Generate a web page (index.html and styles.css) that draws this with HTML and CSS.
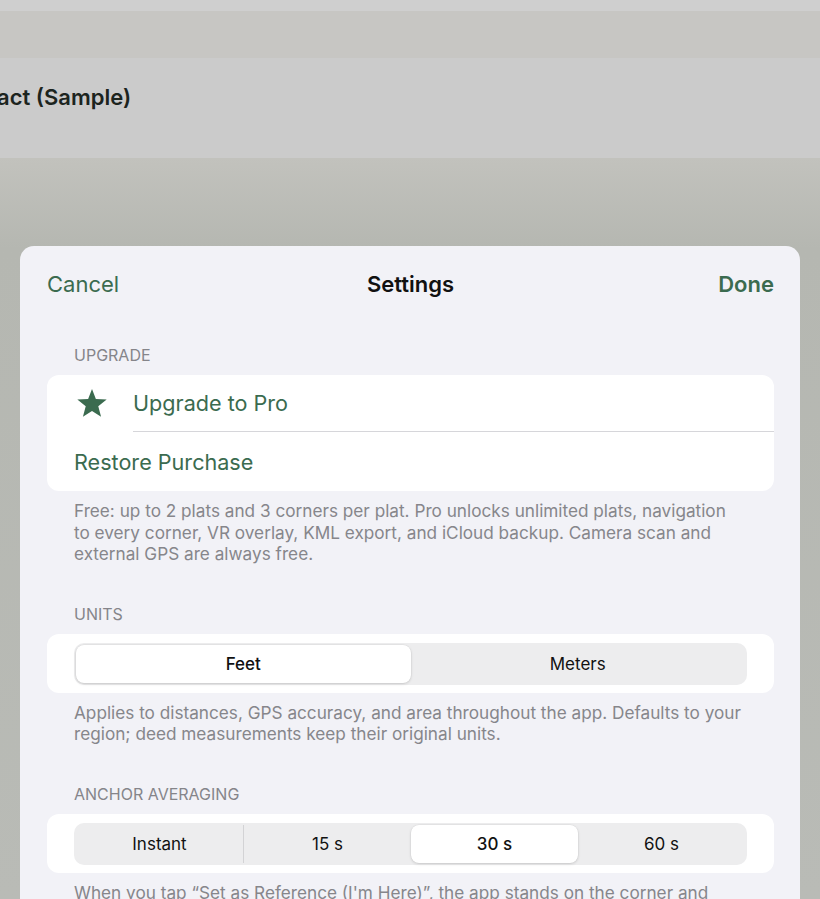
FILE: index.html
```html
<!DOCTYPE html>
<html lang="en">
<head>
  <meta charset="UTF-8">
  <title>Settings</title>
  <link rel="stylesheet" href="styles.css">
</head>
<body>

  <div class="fondo">
    <div class="franja-top"></div>
    <div class="franja-nav"></div>
    <div class="fila-plat">act (Sample)</div>

    <div class="velo">
      <div class="hoja">
        <div class="cabecera">
          <span class="boton-nav">Cancel</span>
          <span class="titulo">Settings</span>
          <span class="boton-nav fuerte">Done</span>
        </div>

        <div class="seccion primera">
          <div class="encabezado">Upgrade</div>
          <div class="tarjeta">
            <div class="fila fila-icono">
              <svg class="estrella" width="32" height="31" viewBox="0 0 24 23">
                <path d="M12 0.6 L14.9 8.1 L23 8.5 L16.7 13.6 L18.8 21.5 L12 17.1 L5.2 21.5 L7.3 13.6 L1 8.5 L9.1 8.1 Z" fill="#3b6b4f"/>
              </svg>
              <span class="texto-fila">Upgrade to Pro</span>
            </div>
            <div class="fila">
              <span class="texto-fila">Restore Purchase</span>
            </div>
          </div>
          <p class="pie">Free: up to 2 plats and 3 corners per plat. Pro unlocks unlimited plats, navigation to every corner, VR overlay, KML export, and iCloud backup. Camera scan and external GPS are always free.</p>
        </div>

        <div class="seccion">
          <div class="encabezado">Units</div>
          <div class="tarjeta tarjeta-seg">
            <div class="segmentos">
              <div class="seg activo">Feet</div>
              <div class="seg">Meters</div>
            </div>
          </div>
          <p class="pie">Applies to distances, GPS accuracy, and area throughout the app. Defaults to your region; deed measurements keep their original units.</p>
        </div>

        <div class="seccion">
          <div class="encabezado">Anchor Averaging</div>
          <div class="tarjeta tarjeta-seg">
            <div class="segmentos">
              <div class="seg">Instant</div>
              <div class="seg divisor">15 s</div>
              <div class="seg activo">30 s</div>
              <div class="seg">60 s</div>
            </div>
          </div>
          <p class="pie">When you tap “Set as Reference (I'm Here)”, the app stands on the corner and averages GPS readings for the selected time before saving.</p>
        </div>
      </div>
    </div>
  </div>

</body>
</html>
```

FILE: styles.css
```css
body {
  margin: 0;
  width: 820px;
  height: 899px;
  overflow: hidden;
  font-family: Inter, "Liberation Sans", sans-serif;
  background-color: #b9bbb6;
}

.franja-top {
  height: 11px;
  background-color: #cfcfcf;
}

.franja-nav {
  height: 47px;
  background-color: #c7c6c3;
}

.fila-plat {
  height: 100px;
  line-height: 78px;
  background-color: #cbcbcb;
  color: #1c241e;
  font-size: 22px;
  font-weight: 600;
  white-space: nowrap;
  overflow: hidden;
  text-indent: -3px;
}

.velo {
  padding-top: 88px;
  height: 741px;
  box-sizing: border-box;
  background: linear-gradient(#c2c2bd, #b5b7b1 90px, #b9bbb6);
}

.hoja {
  margin-left: 20px;
  width: 780px;
  height: 700px;
  background-color: #f2f2f7;
  border-radius: 14px 14px 0 0;
  padding: 0 26px 0 27px;
  box-sizing: border-box;
}

.cabecera {
  height: 76px;
  display: flex;
  align-items: center;
  justify-content: space-between;
  font-size: 22px;
}

.boton-nav {
  color: #3b6b4f;
  width: 120px;
}

.boton-nav.fuerte {
  font-weight: 600;
  text-align: right;
}

.titulo {
  font-weight: 600;
  color: #111;
}

.seccion {
  margin-top: 39px;
}

.seccion.primera {
  margin-top: 23px;
}

.encabezado {
  text-transform: uppercase;
  font-size: 16px;
  line-height: 20px;
  color: #85858a;
  padding-left: 27px;
  margin-bottom: 10px;
}

.tarjeta {
  background-color: #fff;
  border-radius: 12px;
}

.fila {
  display: flex;
  align-items: center;
  height: 59px;
  padding-left: 27px;
}

.fila-icono {
  height: 57px;
  padding-left: 29px;
}

.fila-icono .texto-fila {
  margin-left: 25px;
  flex: 1;
  align-self: stretch;
  display: flex;
  align-items: center;
  border-bottom: 1px solid #d6d6da;
}

.texto-fila {
  color: #3b6b4f;
  font-size: 21.6px;
}

.estrella {
  display: block;
}

.pie {
  margin: 9px 0 0 0;
  padding: 0 30px 0 27px;
  font-size: 17.2px;
  line-height: 21.5px;
  color: #86868b;
}

.tarjeta-seg {
  padding: 9px 27px 8px;
}

.segmentos {
  display: flex;
  height: 42px;
  background-color: #ededee;
  border-radius: 10px;
  padding: 2px;
  box-sizing: border-box;
}

.seg {
  flex: 1;
  display: flex;
  align-items: center;
  justify-content: center;
  font-size: 17px;
  color: #111;
  border-radius: 8px;
}

.seg.activo {
  background-color: #fff;
  font-weight: 500;
  box-shadow: 0 1px 3px rgba(0, 0, 0, 0.14), 0 0 0 0.5px rgba(0, 0, 0, 0.05);
}

.seg.divisor {
  border-left: 1px solid #d3d3d5;
  border-radius: 0;
}
```
